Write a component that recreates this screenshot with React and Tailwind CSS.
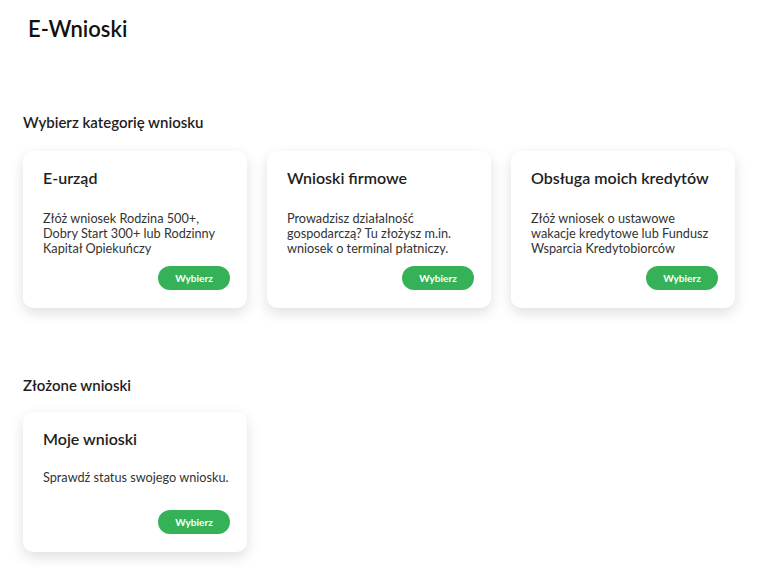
const categories = [
  {
    title: "E-urząd",
    text: "Złóż wniosek Rodzina 500+, Dobry Start 300+ lub Rodzinny Kapitał Opiekuńczy",
  },
  {
    title: "Wnioski firmowe",
    text: "Prowadzisz działalność gospodarczą? Tu złożysz m.in. wniosek o terminal płatniczy.",
  },
  {
    title: "Obsługa moich kredytów",
    text: "Złóż wniosek o ustawowe wakacje kredytowe lub Fundusz Wsparcia Kredytobiorców",
  },
];

function Card({ title, text, short }) {
  return (
    <div className="w-[224px] rounded-[10px] bg-white pt-4 pl-5 pr-[17px] pb-[18px] shadow-[0_5px_14px_rgba(0,0,0,0.13)]">
      <h3 className="whitespace-nowrap text-[16px] leading-[22px] font-semibold text-[#1e1e1e]">{title}</h3>
      <p
        className={
          short
            ? "mt-[20px] -mr-[3px] text-[12.7px] leading-[15px] text-[#333]"
            : "mt-[22px] -mr-[3px] text-[12.7px] leading-[15px] text-[#333]"
        }
      >
        {text}
      </p>
      <div className={short ? "mt-[25px] flex justify-end" : "mt-[10px] flex justify-end"}>
        <button className="h-6 w-[72px] rounded-full bg-[#35b257] text-[10px] font-bold text-white">
          Wybierz
        </button>
      </div>
    </div>
  );
}

export default function App() {
  return (
    <div className="min-h-screen bg-white px-[23px] pt-[15px] font-['Lato',sans-serif]">
      {/* HEADER */}
      <h1 className="ml-[5px] text-[22px] leading-[28px] font-semibold text-[#111]">E-Wnioski</h1>

      {/* CATEGORIES */}
      <h2 className="mt-[69px] text-[15px] leading-[20px] font-semibold text-[#1e1e1e]">
        Wybierz kategorię wniosku
      </h2>
      <div className="mt-[19px] flex items-start gap-5">
        {categories.map((c) => (
          <Card key={c.title} title={c.title} text={c.text} />
        ))}
      </div>

      {/* SUBMITTED */}
      <h2 className="mt-[67px] text-[15px] leading-[20px] font-semibold text-[#1e1e1e]">
        Złożone wnioski
      </h2>
      <div className="mt-[17px] flex">
        <Card title="Moje wnioski" text="Sprawdź status swojego wniosku." short />
      </div>
    </div>
  );
}
